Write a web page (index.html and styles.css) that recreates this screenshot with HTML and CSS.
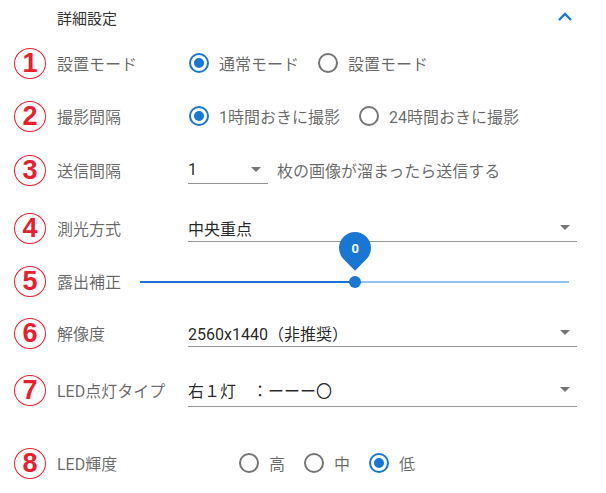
FILE: index.html
```html
<!DOCTYPE html>
<html lang="ja">
<head>
<meta charset="utf-8">
<link rel="stylesheet" href="styles.css">
</head>
<body>
<div class="panel">
  <div class="header">
    <span class="title">詳細設定</span>
    <svg class="chev" width="24" height="24" viewBox="0 0 24 24"><path d="M6 15l6-6 6 6" fill="none" stroke="#1976d2" stroke-width="2.4"/></svg>
  </div>

  <div class="row m1">
    <span class="num">1</span><span class="label">設置モード</span>
    <div class="radios">
      <span class="opt"><span class="radio on"></span>通常モード</span>
      <span class="opt"><span class="radio"></span>設置モード</span>
    </div>
  </div>

  <div class="row m2">
    <span class="num">2</span><span class="label">撮影間隔</span>
    <div class="radios">
      <span class="opt"><span class="radio on"></span>1時間おきに撮影</span>
      <span class="opt"><span class="radio"></span>24時間おきに撮影</span>
    </div>
  </div>

  <div class="row m3">
    <span class="num">3</span><span class="label">送信間隔</span>
    <div class="select small"><span class="val">1</span><span class="arrow"></span></div>
    <span class="suffix">枚の画像が溜まったら送信する</span>
  </div>

  <div class="row m4">
    <span class="num">4</span><span class="label">測光方式</span>
    <div class="select wide"><span class="val">中央重点</span><span class="arrow"></span></div>
  </div>

  <div class="row m5">
    <span class="num">5</span><span class="label short">露出補正</span>
    <div class="slider">
      <div class="fill" style="width:215px"></div>
      <div class="thumb" style="left:215px">
        <span class="bubble"><span class="bubble-text">0</span></span>
      </div>
    </div>
  </div>

  <div class="row m6">
    <span class="num">6</span><span class="label">解像度</span>
    <div class="select wide"><span class="val">2560x1440（非推奨）</span><span class="arrow"></span></div>
  </div>

  <div class="row m7">
    <span class="num">7</span><span class="label">LED点灯タイプ</span>
    <div class="select wide tall"><span class="val">右１灯　：ーーー〇</span><span class="arrow"></span></div>
  </div>

  <div class="row m8">
    <span class="num">8</span><span class="label">LED輝度</span>
    <div class="radios shifted">
      <span class="opt"><span class="radio"></span>高</span>
      <span class="opt"><span class="radio"></span>中</span>
      <span class="opt"><span class="radio on"></span>低</span>
    </div>
  </div>
</div>
</body>
</html>
```

FILE: styles.css
```css
* { box-sizing: border-box; }
html, body { margin: 0; padding: 0; background: #fff; }
body {
  font-family: Roboto, "Noto Sans CJK JP", sans-serif;
  font-size: 16px;
  color: rgba(0,0,0,0.87);
}
.panel { width: 606px; }

.header {
  height: 34px;
  display: flex;
  align-items: center;
  justify-content: space-between;
  padding-left: 57px;
  padding-right: 29px;
}
.title { font-size: 15px; color: #333; }
.chev { display: block; }

.row {
  height: 34px;
  display: flex;
  align-items: center;
  padding-left: 14px;
}
.m1 { margin-top: 12px; }
.m2 { margin-top: 19px; }
.m3 { margin-top: 20px; }
.m4 { margin-top: 24px; }
.m5 { margin-top: 19px; }
.m6 { margin-top: 18px; }
.m7 { margin-top: 23px; }
.m8 { margin-top: 39px; }

.num {
  flex: none;
  width: 32px;
  height: 31px;
  border: 1.5px solid #e8202e;
  border-radius: 50%;
  color: #e8202e;
  font-family: "Liberation Sans", Arial, sans-serif;
  font-weight: bold;
  font-size: 27px;
  line-height: 28px;
  text-align: center;
}
.label {
  flex: none;
  width: 131px;
  margin-left: 11px;
  color: rgba(0,0,0,0.6);
  white-space: nowrap;
}
.label.short { width: 83px; }

.radios { display: flex; align-items: center; gap: 19px; margin-left: 1px; }
.radios.shifted { margin-left: 51px; }
.opt {
  display: flex;
  align-items: center;
  color: rgba(0,0,0,0.6);
  white-space: nowrap;
}
.radio {
  position: relative;
  width: 20px;
  height: 20px;
  margin-right: 10px;
  border: 2px solid #757575;
  border-radius: 50%;
}
.radio.on { border-color: #1976d2; }
.radio.on::after {
  content: "";
  position: absolute;
  left: 3px; top: 3px;
  width: 10px; height: 10px;
  border-radius: 50%;
  background: #1976d2;
}

.select {
  display: flex;
  align-items: center;
  justify-content: space-between;
  align-self: flex-start;
  height: 31px;
  padding-top: 3px;
  border-bottom: 1px solid #949494;
}
.select.small { width: 80px; }
.select.wide { width: 389px; }
.select.tall { height: 34px; padding-top: 0; }
.val { white-space: nowrap; }
.arrow {
  width: 0; height: 0;
  margin-right: 7px;
  border-left: 5px solid transparent;
  border-right: 5px solid transparent;
  border-top: 5px solid #757575;
}
.suffix { margin-left: 9px; color: rgba(0,0,0,0.6); white-space: nowrap; }

.slider {
  position: relative;
  width: 429px;
  height: 2px;
  background: #90c2f2;
  margin-top: 2px;
}
.fill { height: 2px; background: #1976d2; }
.thumb {
  position: absolute;
  top: -5px;
  width: 12px; height: 12px;
  margin-left: -6px;
  border-radius: 50%;
  background: #1976d2;
}
.bubble {
  position: absolute;
  left: -10px;
  top: -44px;
  width: 32px; height: 32px;
  border-radius: 50% 50% 50% 0;
  background: #1976d2;
  transform: rotate(-45deg);
  display: flex;
  align-items: center;
  justify-content: center;
}
.bubble-text {
  transform: rotate(45deg);
  color: #fff;
  font-size: 13px;
  font-weight: bold;
}
```
